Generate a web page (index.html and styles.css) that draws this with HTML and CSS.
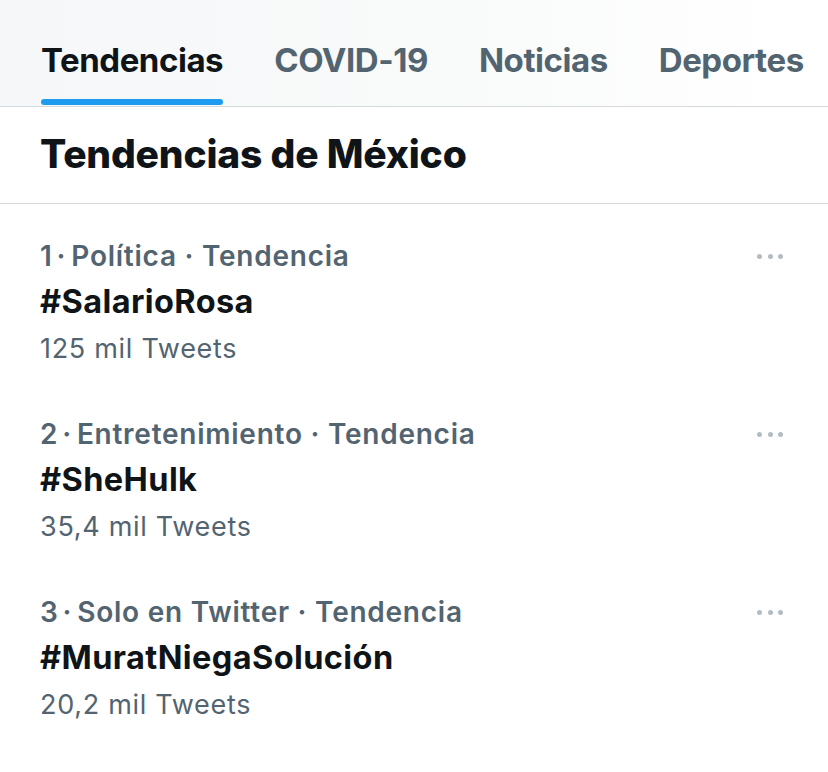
FILE: index.html
```html
<!DOCTYPE html>
<html lang="es">
<head>
<meta charset="utf-8">
<title>Tendencias</title>
<link rel="stylesheet" href="styles.css">
</head>
<body>
<div class="page">
  <nav class="tabs">
    <div class="tab active"><span class="tab-label">Tendencias</span><span class="tab-bar"></span></div>
    <div class="tab"><span class="tab-label">COVID-19</span></div>
    <div class="tab"><span class="tab-label">Noticias</span></div>
    <div class="tab"><span class="tab-label">Deportes</span></div>
  </nav>
  <h1 class="heading">Tendencias de México</h1>
  <ul class="trends">
    <li class="trend">
      <div class="trend-body">
        <div class="meta">1<span class="dot-sep">·</span>Política · Tendencia</div>
        <div class="tag">#SalarioRosa</div>
        <div class="count">125 mil Tweets</div>
      </div>
      <div class="more"><span></span><span></span><span></span></div>
    </li>
    <li class="trend">
      <div class="trend-body">
        <div class="meta">2<span class="dot-sep">·</span>Entretenimiento · Tendencia</div>
        <div class="tag">#SheHulk</div>
        <div class="count">35,4 mil Tweets</div>
      </div>
      <div class="more"><span></span><span></span><span></span></div>
    </li>
    <li class="trend">
      <div class="trend-body">
        <div class="meta">3<span class="dot-sep">·</span>Solo en Twitter · Tendencia</div>
        <div class="tag">#MuratNiegaSolución</div>
        <div class="count">20,2 mil Tweets</div>
      </div>
      <div class="more"><span></span><span></span><span></span></div>
    </li>
  </ul>
</div>
</body>
</html>
```
FILE: styles.css
```css
html, body {
  margin: 0;
  padding: 0;
  background: #ffffff;
}
body {
  font-family: Inter, "Noto Sans", "Liberation Sans", sans-serif;
  color: #0f1419;
  width: 828px;
  height: 772px;
  overflow: hidden;
}
.page {
  width: 828px;
}
.tabs {
  display: flex;
  gap: 51px;
  padding: 40px 0 1px 41px;
  border-bottom: 1px solid #d6d9db;
  background: linear-gradient(90deg, #f6f7f8 0%, #f9fafa 55%, #ffffff 95%);
}
.tab {
  display: flex;
  flex-direction: column;
  align-items: stretch;
}
.tab-label {
  font-size: 33px;
  line-height: 40px;
  font-weight: 700;
  letter-spacing: -0.45px;
  color: #536471;
  white-space: nowrap;
  padding-bottom: 25px;
}
.tab.active .tab-label {
  color: #0f1419;
  padding-bottom: 19px;
}
.tab-bar {
  display: block;
  height: 6px;
  border-radius: 3px;
  background: #1d9bf0;
}
.heading {
  margin: 0;
  padding: 0 0 2px 40px;
  font-size: 39px;
  line-height: 94px;
  font-weight: 800;
  letter-spacing: -0.2px;
  border-bottom: 1px solid #d6d9db;
}
.trends {
  list-style: none;
  margin: 0;
  padding: 0;
}
.trend {
  display: flex;
  justify-content: space-between;
  align-items: flex-start;
  padding: 29px 45px 9px 40px;
}
.meta {
  font-size: 28px;
  line-height: 46px;
  font-weight: 600;
  color: #536471;
  letter-spacing: 0.75px;
}
.dot-sep {
  margin: 0 5px 0 4px;
}
.tag {
  font-size: 32.5px;
  line-height: 46px;
  font-weight: 700;
  letter-spacing: 0.4px;
}
.count {
  font-size: 27px;
  line-height: 48px;
  font-weight: 400;
  color: #536471;
  letter-spacing: 0.7px;
}
.more {
  display: flex;
  align-items: center;
  gap: 5.5px;
  height: 46px;
}
.more span {
  width: 5px;
  height: 5px;
  border-radius: 50%;
  background: #b4bcc3;
}
```
